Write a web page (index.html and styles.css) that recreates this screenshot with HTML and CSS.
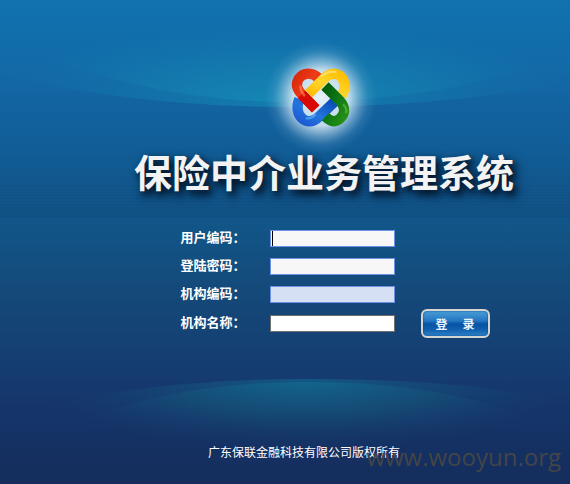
FILE: index.html
```html
<!DOCTYPE html>
<html lang="zh-CN">
<head>
<meta charset="utf-8">
<meta name="viewport" content="width=device-width, initial-scale=1">
<title>保险中介业务管理系统</title>
<link rel="stylesheet" href="styles.css">
</head>
<body>
<svg class="backdrop" viewBox="0 0 570 484" preserveAspectRatio="none" aria-hidden="true">
  <defs>
    <radialGradient id="upper" gradientUnits="userSpaceOnUse" cx="0" cy="0" r="1" gradientTransform="translate(285 107) scale(300 85)">
      <stop offset="0" stop-color="#1596bd" stop-opacity=".8"/>
      <stop offset=".5" stop-color="#1588b4" stop-opacity=".5"/>
      <stop offset="1" stop-color="#1478b0" stop-opacity="0"/>
    </radialGradient>
    <radialGradient id="lower" gradientUnits="userSpaceOnUse" cx="0" cy="0" r="1" gradientTransform="translate(305 379) scale(300 70)">
      <stop offset="0" stop-color="#11769a" stop-opacity=".7"/>
      <stop offset=".5" stop-color="#146080" stop-opacity=".4"/>
      <stop offset="1" stop-color="#153b70" stop-opacity="0"/>
    </radialGradient>
    <pattern id="lines" width="10" height="3" patternUnits="userSpaceOnUse">
      <rect width="10" height="1" fill="#0b3f74" opacity=".14"/>
    </pattern>
    <linearGradient id="band" x1="0" y1="0" x2="0" y2="1">
      <stop offset="0" stop-color="#0e4a80" stop-opacity="0"/>
      <stop offset="1" stop-color="#0e4676" stop-opacity=".25"/>
    </linearGradient>
  </defs>
  <path d="M0 0H570V83Q440 107 290 107T0 75Z" fill="url(#upper)" opacity=".65"/>
  <path d="M0 0H570V55Q440 102 290 102T0 38Z" fill="url(#upper)" opacity=".6"/>
  <rect y="150" width="570" height="68" fill="url(#band)"/>
  <rect y="186" width="570" height="32" fill="url(#lines)"/>
  <path d="M0 418Q130 379 305 379T570 404V484H0Z" fill="url(#lower)" opacity=".7"/>
  <path d="M0 458Q130 382 305 382T570 440V484H0Z" fill="url(#lower)" opacity=".7"/>
</svg>

<main class="login">
  <svg class="logo" viewBox="0 0 330 300" role="img" aria-label="保险中介业务管理系统">
    <defs>
      <radialGradient id="halo">
        <stop offset="0" stop-color="#e6f1f8"/>
        <stop offset=".5" stop-color="#d3e6f3" stop-opacity=".9"/>
        <stop offset=".68" stop-color="#b5d4ea" stop-opacity=".5"/>
        <stop offset=".84" stop-color="#8fbfe0" stop-opacity=".16"/>
        <stop offset="1" stop-color="#80b5dc" stop-opacity="0"/>
      </radialGradient>
      <linearGradient id="red" x1="0" y1="0" x2="1" y2="1">
        <stop offset="0" stop-color="#d92a0b"/><stop offset=".45" stop-color="#ee3c18"/><stop offset="1" stop-color="#d40500"/>
      </linearGradient>
      <linearGradient id="yellow" x1="0" y1="1" x2="1" y2="0">
        <stop offset="0" stop-color="#ffb900"/><stop offset=".5" stop-color="#ffd52d"/><stop offset="1" stop-color="#ffbd00"/>
      </linearGradient>
      <linearGradient id="green" x1="0" y1="0" x2="1" y2="1">
        <stop offset="0" stop-color="#005c0b"/><stop offset=".6" stop-color="#137d16"/><stop offset="1" stop-color="#268f16"/>
      </linearGradient>
      <linearGradient id="blue" x1="0" y1="1" x2="1" y2="0">
        <stop offset="0" stop-color="#1c59d2"/><stop offset=".4" stop-color="#2475df"/><stop offset="1" stop-color="#0546b0"/>
      </linearGradient>
    </defs>
    <circle cx="155" cy="155" r="168" fill="url(#halo)"/>
    <g fill="none" stroke-width="31">
      <path d="M149 97C130 77 103 79 90 97C78 116 84 130 98 145L139 187" stroke="url(#red)"/>
      <path d="M91 160C82 179 84 202 98 216C114 231 134 228 149 213L199 165" stroke="url(#blue)"/>
      <path d="M98 145L140 189" stroke="#d90903"/>
      <path d="M119 143L169 94C184 80 207 80 219 96C229 111 229 132 217 150" stroke="url(#yellow)"/>
      <path d="M168 120L214 166C230 184 228 204 214 217C199 231 184 226 169 212" stroke="url(#green)"/>
    </g>
    <g fill="none" stroke-linecap="round" stroke-width="7" opacity=".55">
      <path d="M94 122Q95 137 106 148" stroke="#ff9a77"/>
      <path d="M158 89Q181 73 200 78" stroke="#fff2a0"/>
      <path d="M224 177Q235 188 231 199" stroke="#72c650"/>
      <path d="M113 217Q126 219 138 207" stroke="#6bcaff"/>
    </g>
  </svg>

  <h1 class="title">保险中介业务管理系统</h1>

  <form class="form">
    <label for="user">用户编码：</label>
    <input class="field focused" id="user" type="text">
    <label for="password">登陆密码：</label>
    <input class="field" id="password" type="password">
    <label for="org-code">机构编码：</label>
    <input class="field tinted" id="org-code" type="text">
    <label for="org-name">机构名称：</label>
    <input class="field plain" id="org-name" type="text">
    <button class="submit" type="button"><span>登</span><span>录</span></button>
  </form>
</main>

<footer class="footer">广东保联金融科技有限公司版权所有</footer>
<div class="watermark">www.wooyun.org</div>
</body>
</html>
```
FILE: styles.css
```css
* {
  box-sizing: border-box;
}

body {
  position: relative;
  display: flex;
  flex-direction: column;
  min-height: 100vh;
  margin: 0;
  overflow-x: hidden;
  color: #fff;
  font-family: "Liberation Sans", "Noto Sans CJK SC", sans-serif;
  background: linear-gradient(#1072af 0%, #126aa7 14%, #12629f 23%, #115b93 34%, #125486 48%, #144878 62%, #153c71 77%, #15356a 84%, #142d5c 100%);
}

.backdrop {
  position: absolute;
  inset: 0;
  width: 100%;
  height: 100%;
  z-index: -1;
}

.login {
  display: flex;
  flex-direction: column;
  align-items: center;
  padding: 46px 0 0 78px;
}

.logo {
  width: 110px;
  height: 100px;
  overflow: visible;
}

.title {
  margin: 8px 0 30px;
  font-size: 38px;
  font-weight: 700;
  line-height: 40px;
  white-space: nowrap;
  color: #f3f3f3;
  text-shadow: 3px 4px 6px #03152a, 4px 5px 12px #041c35;
}

.form {
  display: grid;
  grid-template-columns: 89px 125px 95px;
  grid-template-rows: 28px 28px 28px 30px;
  align-items: center;
  margin-left: 22px;
}

.form label {
  grid-column: 1;
  font-size: 13px;
  font-weight: 700;
  line-height: 16px;
  white-space: nowrap;
}

.field {
  grid-column: 2;
  width: 100%;
  height: 17px;
  margin: 0;
  padding: 0 2px;
  border: 1px solid #6f91e5;
  border-radius: 0;
  background: #f7f7f7;
  font-size: 12px;
  outline: none;
}

.focused {
  background: linear-gradient(#000, #000) 1px 0 / 1px 100% no-repeat #f7f7f7;
}

.tinted {
  background: #d6e0f5;
}

.plain {
  border-color: #716f6d;
  background: #fff;
}

.submit {
  grid-column: 3;
  justify-self: end;
  display: flex;
  justify-content: center;
  gap: 15px;
  width: 69px;
  height: 29px;
  margin: 0;
  padding: 0;
  align-items: center;
  border: 2px solid #d5d5d2;
  border-radius: 6px;
  color: #e8f4ff;
  font-family: inherit;
  font-size: 12px;
  font-weight: 700;
  background: linear-gradient(#4b9ed8 0%, #2376bf 40%, #0752a5 52%, #1260b0 75%, #2b83c8 100%);
  box-shadow: inset 0 0 2px #083d80;
}

.footer {
  margin: auto 0 23px;
  padding-left: 38px;
  font-size: 12px;
  line-height: 16px;
  text-align: center;
}

.watermark {
  position: absolute;
  right: 9px;
  bottom: 10px;
  color: #444547;
  font-family: "Open Sans", sans-serif;
  font-size: 24px;
  line-height: 34px;
}
```
